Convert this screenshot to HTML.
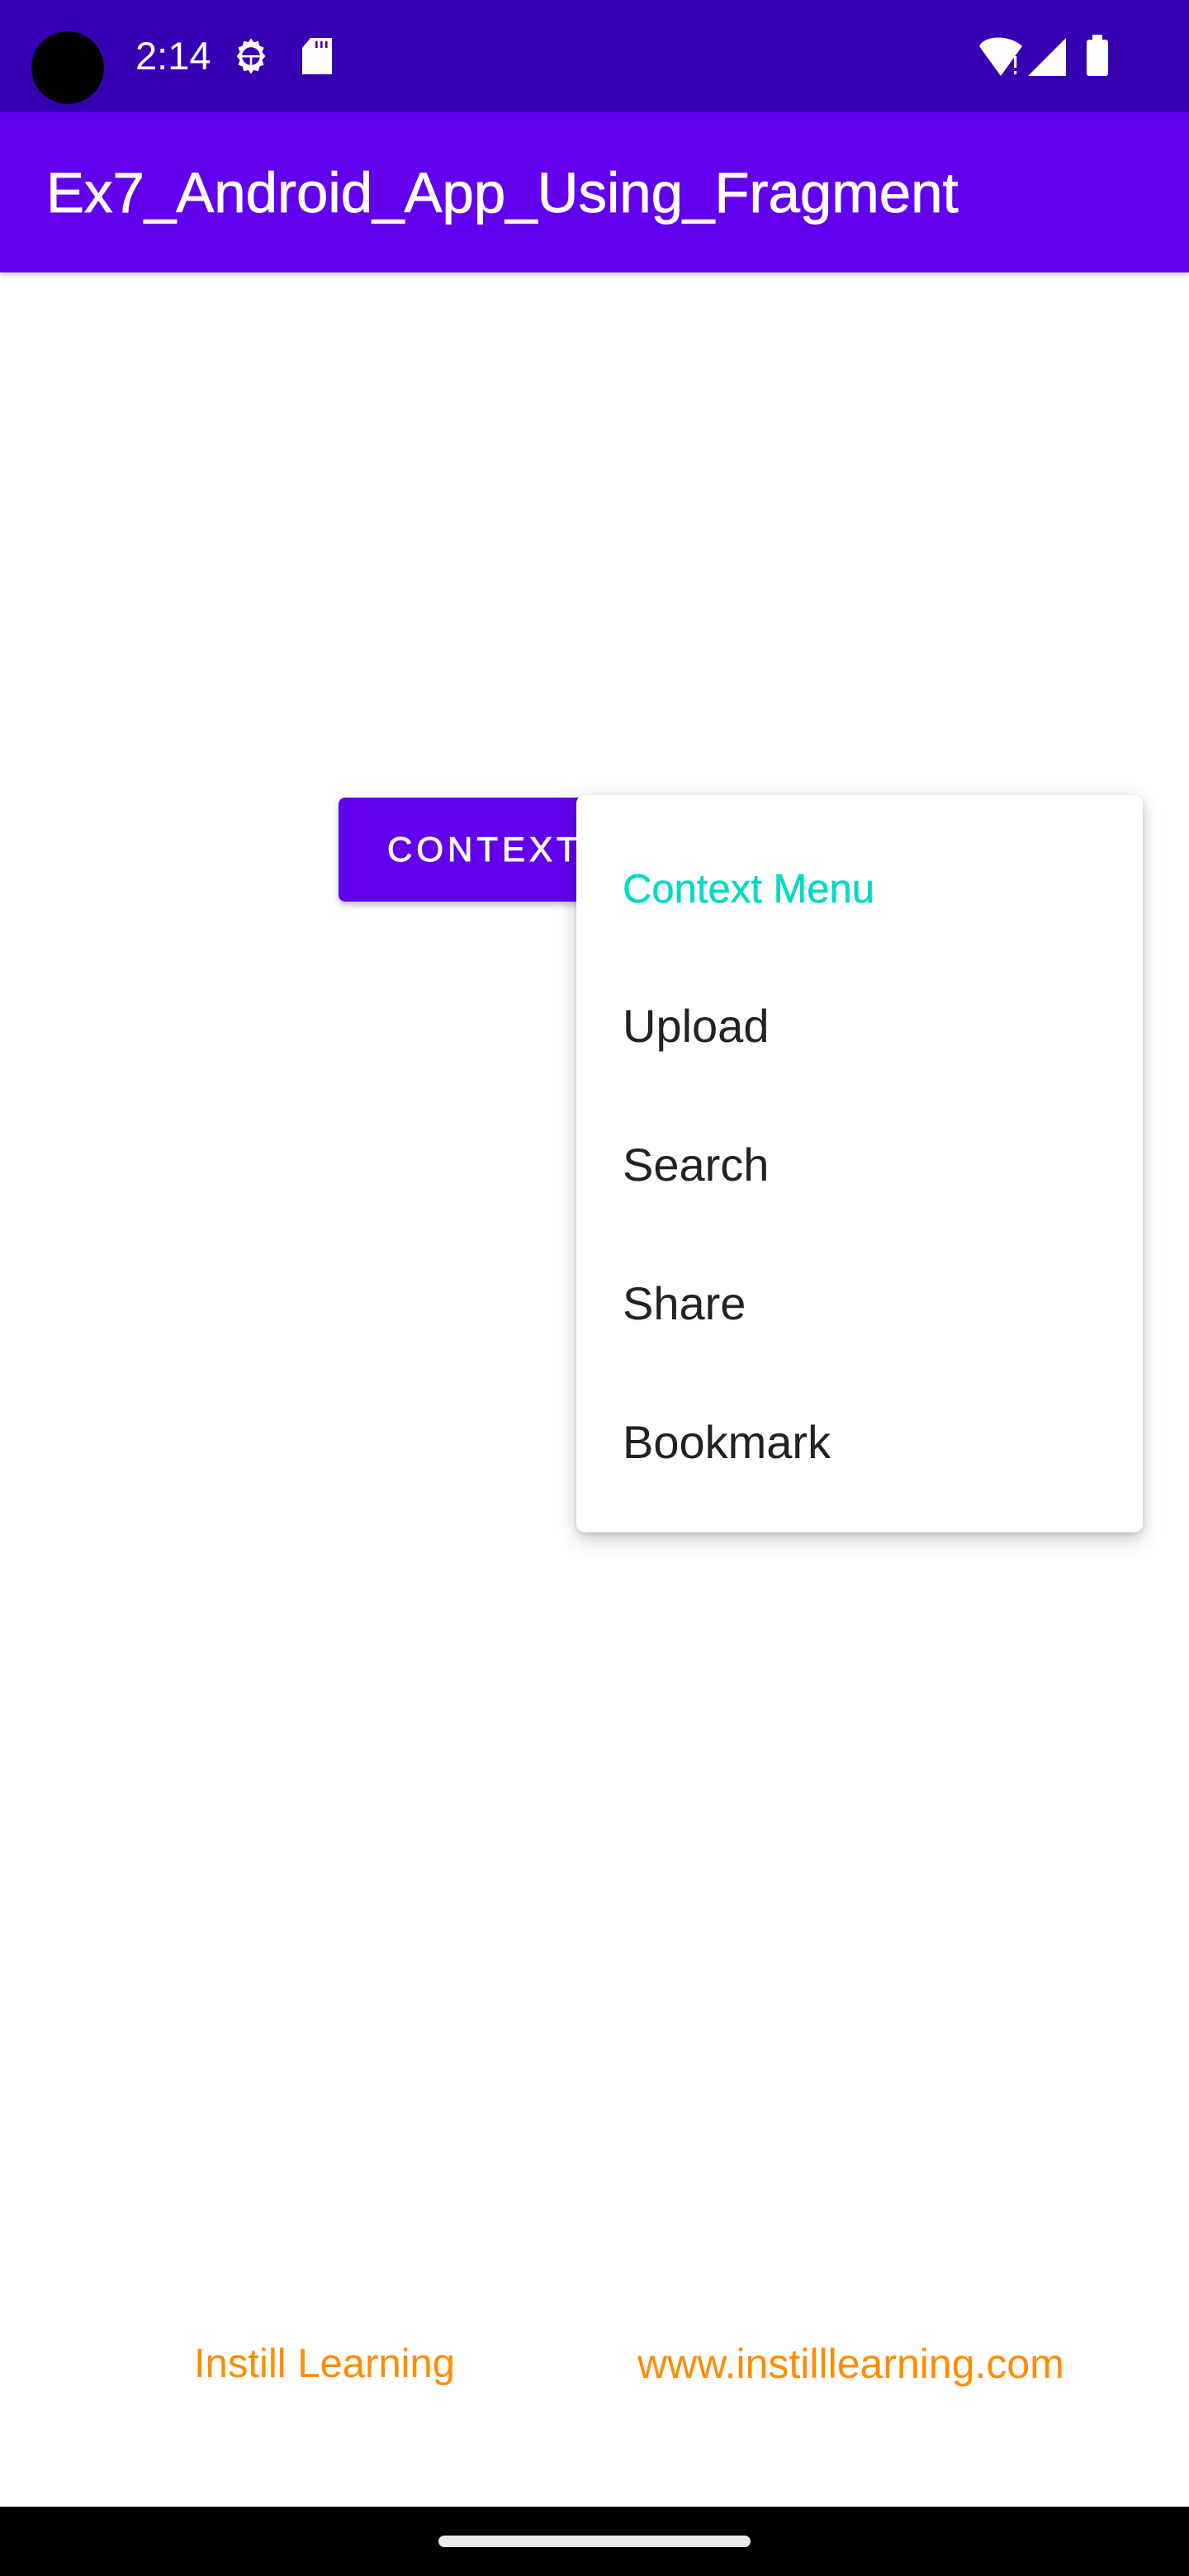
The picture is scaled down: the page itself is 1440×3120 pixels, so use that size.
<!DOCTYPE html>
<html><head><meta charset="utf-8"><style>
*{margin:0;padding:0;box-sizing:border-box}
body{width:1440px;height:3120px;position:relative;background:#fff;font-family:"Liberation Sans",sans-serif;overflow:hidden}
.abs{position:absolute}
</style></head><body>
<div class="abs" style="left:0;top:0;width:1440px;height:136px;background:#3700B3"></div>
<div class="abs" style="left:38px;top:38px;width:88px;height:88px;border-radius:50%;background:#000"></div>
<div class="abs" style="left:164px;top:41px;color:#fff;font-size:47px;line-height:54px">2:14</div>
<svg class="abs" style="left:278px;top:42px" width="52" height="52" viewBox="0 0 24 24"><path fill="#fff" d="M12 2l1.5 2.2 2.6-.6.6 2.6 2.5 1-1 2.5L20 12l-1.8 2.3 1 2.5-2.5 1-.6 2.6-2.6-.6L12 22l-1.5-2.2-2.6.6-.6-2.6-2.5-1 1-2.5L4 12l1.8-2.3-1-2.5 2.5-1 .6-2.6 2.6.6z"/><circle cx="12" cy="12" r="5" fill="#3700B3"/><rect x="7" y="11.5" width="10" height="1.2" fill="#fff"/><rect x="11.4" y="12" width="1.2" height="5" fill="#fff"/></svg>
<svg class="abs" style="left:364px;top:46px" width="40" height="46" viewBox="0 0 20 23"><path fill="#fff" d="M6 0h13v22H1V6z"/><rect x="9" y="2" width="1.3" height="4" fill="#3700B3"/><rect x="12" y="2" width="1.3" height="4" fill="#3700B3"/><rect x="15" y="2" width="1.3" height="4" fill="#3700B3"/></svg>
<svg class="abs" style="left:1186px;top:44px" width="54" height="48" viewBox="0 0 27 24"><path fill="#fff" d="M0 6C3-1 19-1 26 6L13 24z"/><rect x="21" y="12" width="2" height="6" fill="#3700B3"/><rect x="21" y="12" width="1.6" height="7" fill="#fff"/><rect x="21" y="21" width="1.6" height="2" fill="#fff"/></svg>
<svg class="abs" style="left:1245px;top:46px" width="46" height="46" viewBox="0 0 23 23"><path fill="#fff" d="M23 0v23H0z"/></svg>
<div class="abs" style="left:1316px;top:48px;width:26px;height:44px;background:#fff;border-radius:3px"></div>
<div class="abs" style="left:1323px;top:42px;width:12px;height:8px;background:#fff"></div>

<div class="abs" style="left:0;top:136px;width:1440px;height:194px;background:#6200EE;box-shadow:0 3px 6px rgba(0,0,0,.2)"></div>
<div class="abs" style="left:56px;top:194px;color:#fff;font-size:69px;line-height:80px;font-weight:500;-webkit-text-stroke:0.8px #fff">Ex7_Android_App_Using_Fragment</div>

<div class="abs" style="left:410px;top:966px;width:420px;height:126px;background:#6200EE;border-radius:8px;box-shadow:0 4px 8px rgba(0,0,0,.25)"></div>
<div class="abs" style="left:469px;top:1004px;color:#fff;font-size:42px;line-height:50px;letter-spacing:5px;-webkit-text-stroke:1px #fff">CONTEXT</div>

<div class="abs" style="left:698px;top:963px;width:686px;height:893px;background:#fff;border-radius:10px;box-shadow:0 8px 24px rgba(0,0,0,.22),0 2px 6px rgba(0,0,0,.12)"></div>
<div class="abs" style="left:754px;top:1048px;color:#03DAC5;font-size:49px;line-height:58px;-webkit-text-stroke:0.5px #03DAC5">Context Menu</div>
<div class="abs" style="left:754px;top:1211px;color:#222;font-size:56px;line-height:64px">Upload</div>
<div class="abs" style="left:754px;top:1379px;color:#222;font-size:56px;line-height:64px">Search</div>
<div class="abs" style="left:754px;top:1547px;color:#222;font-size:56px;line-height:64px">Share</div>
<div class="abs" style="left:754px;top:1715px;color:#222;font-size:56px;line-height:64px">Bookmark</div>

<div class="abs" style="left:235px;top:2834px;color:#FF8C00;font-size:49px;line-height:58px">Instill Learning</div>
<div class="abs" style="left:772px;top:2834px;color:#FF8C00;font-size:50px;line-height:58px">www.instilllearning.com</div>

<div class="abs" style="left:0;top:3036px;width:1440px;height:84px;background:#000"></div>
<div class="abs" style="left:531px;top:3071px;width:378px;height:14px;background:#eaeaea;border-radius:7px"></div>
</body></html>
